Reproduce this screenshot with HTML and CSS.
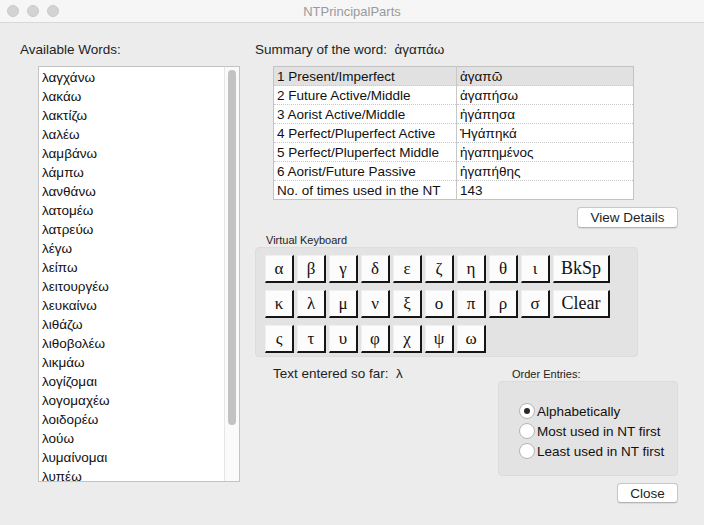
FILE: index.html
```html
<!DOCTYPE html>
<html>
<head>
<meta charset="utf-8">
<link rel="stylesheet" href="styles.css">
</head>
<body>
<div class="window">
  <div class="titlebar">
    <div class="lights"><span class="light"></span><span class="light"></span><span class="light"></span></div>
    <div class="title">NTPrincipalParts</div>
    <div class="lights-spacer"></div>
  </div>
  <div class="main">
    <div class="left">
      <div class="label">Available Words:</div>
      <div class="list">
        <div class="items">
          <div class="item">λαγχάνω</div>
          <div class="item">λακάω</div>
          <div class="item">λακτίζω</div>
          <div class="item">λαλέω</div>
          <div class="item">λαμβάνω</div>
          <div class="item">λάμπω</div>
          <div class="item">λανθάνω</div>
          <div class="item">λατομέω</div>
          <div class="item">λατρεύω</div>
          <div class="item">λέγω</div>
          <div class="item">λείπω</div>
          <div class="item">λειτουργέω</div>
          <div class="item">λευκαίνω</div>
          <div class="item">λιθάζω</div>
          <div class="item">λιθοβολέω</div>
          <div class="item">λικμάω</div>
          <div class="item">λογίζομαι</div>
          <div class="item">λογομαχέω</div>
          <div class="item">λοιδορέω</div>
          <div class="item">λούω</div>
          <div class="item">λυμαίνομαι</div>
          <div class="item">λυπέω</div>
        </div>
        <div class="scrolltrack"><div class="thumb"></div></div>
      </div>
    </div>
    <div class="right">
      <div class="label">Summary of the word:&nbsp;&nbsp;ἀγαπάω</div>
      <table class="summary">
        <tr class="sel"><td class="c1">1 Present/Imperfect</td><td class="c2">ἀγαπῶ</td></tr>
        <tr><td class="c1">2 Future Active/Middle</td><td class="c2">ἀγαπήσω</td></tr>
        <tr><td class="c1">3 Aorist Active/Middle</td><td class="c2">ἠγάπησα</td></tr>
        <tr><td class="c1">4 Perfect/Pluperfect Active</td><td class="c2">Ἠγάπηκά</td></tr>
        <tr><td class="c1">5 Perfect/Pluperfect Middle</td><td class="c2">ἠγαπημένος</td></tr>
        <tr><td class="c1">6 Aorist/Future Passive</td><td class="c2">ἠγαπήθης</td></tr>
        <tr class="last"><td class="c1">No. of times used in the NT</td><td class="c2">143</td></tr>
      </table>
      <div class="btn-row"><button class="mac-btn details">View Details</button></div>
      <div class="small-label kb-label">Virtual Keyboard</div>
      <div class="keyboard">
        <div class="krow">
          <span class="key">α</span><span class="key">β</span><span class="key">γ</span><span class="key">δ</span><span class="key">ε</span><span class="key">ζ</span><span class="key">η</span><span class="key">θ</span><span class="key">ι</span><span class="key wide">BkSp</span>
        </div>
        <div class="krow">
          <span class="key">κ</span><span class="key">λ</span><span class="key">μ</span><span class="key">ν</span><span class="key">ξ</span><span class="key">ο</span><span class="key">π</span><span class="key">ρ</span><span class="key">σ</span><span class="key wide">Clear</span>
        </div>
        <div class="krow">
          <span class="key">ς</span><span class="key">τ</span><span class="key">υ</span><span class="key">φ</span><span class="key">χ</span><span class="key">ψ</span><span class="key">ω</span>
        </div>
      </div>
      <div class="bottom">
        <div class="entered">Text entered so far:&nbsp;&nbsp;λ</div>
        <div class="order">
          <div class="small-label order-label">Order Entries:</div>
          <div class="order-box">
            <div class="radio-row"><span class="radio on"></span>Alphabetically</div>
            <div class="radio-row"><span class="radio"></span>Most used in NT first</div>
            <div class="radio-row"><span class="radio"></span>Least used in NT first</div>
          </div>
          <div class="btn-row"><button class="mac-btn close">Close</button></div>
        </div>
      </div>
    </div>
  </div>
</div>
</body>
</html>
```
FILE: styles.css
```css
* { box-sizing: border-box; }
html, body { margin: 0; padding: 0; }
body {
  width: 704px;
  height: 525px;
  overflow: hidden;
  font-family: "Liberation Sans", Arial, sans-serif;
  font-size: 13.5px;
  color: #1e1e1e;
  background: #ececec;
}
.window {
  width: 704px;
  height: 525px;
  background: #ececec;
  display: flex;
  flex-direction: column;
}
.titlebar {
  height: 23px;
  flex: none;
  display: flex;
  align-items: center;
  background: #f6f6f6;
  border-bottom: 1px solid #d8d8d8;
}
.lights {
  width: 70px;
  display: flex;
  gap: 8px;
  padding-left: 7px;
}
.light {
  width: 12px;
  height: 12px;
  border-radius: 50%;
  background: #d3d3d3;
  border: 1px solid #cacaca;
}
.lights-spacer { width: 70px; }
.title {
  flex: 1;
  text-align: center;
  color: #9a9a9a;
  font-size: 13px;
}
.main {
  display: flex;
  padding-top: 19px;
}
.label {
  line-height: 16px;
  height: 16px;
  white-space: nowrap;
}
.left {
  width: 255px;
  padding-left: 20px;
}
.list {
  margin-top: 8px;
  margin-left: 18px;
  width: 202px;
  height: 416px;
  border: 1px solid #c3c3c3;
  background: #fff;
  display: flex;
  overflow: hidden;
}
.items {
  flex: 1;
  padding-top: 1px;
}
.item {
  height: 19px;
  line-height: 19px;
  padding-left: 3px;
  white-space: nowrap;
  color: #111;
}
.scrolltrack {
  width: 15px;
  flex: none;
  background: #fafafa;
  border-left: 1px solid #e6e6e6;
  padding: 3px 0 0 3px;
}
.thumb {
  width: 8px;
  height: 355px;
  border-radius: 4px;
  background: #c2c2c2;
}
.right {
  width: 423px;
}
.summary {
  margin-top: 8px;
  margin-left: 18px;
  border-collapse: collapse;
  border: 1px solid #c3c3c3;
  background: #fff;
  width: 361px;
}
.summary td {
  height: 19px;
  padding: 1px 0 0 3px;
  line-height: 17px;
  border-bottom: 1px dotted #c8c8c8;
  white-space: nowrap;
  color: #111;
}
.summary tr.last td { border-bottom: none; }
.summary td.c1 { width: 183px; border-right: 1px solid #c8c8c8; }
.summary tr.sel td { background: #e1e1e1; }
.btn-row {
  display: flex;
  justify-content: flex-end;
}
.mac-btn {
  font-family: "Liberation Sans", Arial, sans-serif;
  font-size: 13.5px;
  color: #1e1e1e;
  background: #fff;
  border: 1px solid #c8c8c8;
  border-bottom-color: #b4b4b4;
  border-radius: 4px;
  padding: 0;
  box-shadow: 0 0.5px 1px rgba(0,0,0,0.08);
}
.details {
  margin-top: 7px;
  width: 101px;
  height: 21px;
}
.small-label {
  font-size: 11px;
  line-height: 13px;
  color: #222;
}
.kb-label {
  margin-top: 6px;
  padding-left: 11px;
}
.keyboard {
  width: 383px;
  height: 110px;
  background: #e3e3e3;
  border: 1px solid #dcdcdc;
  border-radius: 4px;
  padding: 7px 0 0 9px;
  display: flex;
  flex-direction: column;
  gap: 7px;
}
.krow {
  display: flex;
  gap: 3px;
}
.key {
  width: 29px;
  height: 28px;
  background: #fcfcfc;
  border-top: 1px solid #f0f0f0;
  border-left: 1px solid #f0f0f0;
  border-right: 2px solid #151515;
  border-bottom: 2px solid #151515;
  font-family: "Liberation Serif", "Times New Roman", serif;
  font-size: 17px;
  color: #111;
  display: flex;
  align-items: center;
  justify-content: center;
}
.key.wide { width: 57px; font-size: 18px; }
.bottom {
  display: flex;
  justify-content: space-between;
  margin-top: 9px;
}
.entered {
  padding-left: 18px;
  line-height: 16px;
}
.order {
  width: 180px;
  margin-top: 2px;
}
.order-label { padding-left: 14px; }
.order-box {
  height: 95px;
  background: #e3e3e3;
  border: 1px solid #dcdcdc;
  border-radius: 4px;
  padding: 19px 0 0 20px;
}
.radio-row {
  display: flex;
  align-items: center;
  height: 20px;
  color: #111;
}
.radio {
  width: 16px;
  height: 16px;
  border-radius: 50%;
  border: 1px solid #b5b5b5;
  background: #fff;
  margin-right: 2px;
  display: flex;
  align-items: center;
  justify-content: center;
}
.radio.on::after {
  content: "";
  width: 6px;
  height: 6px;
  border-radius: 50%;
  background: #2a2a2a;
}
.close {
  margin-top: 7px;
  width: 61px;
  height: 20px;
}
```
